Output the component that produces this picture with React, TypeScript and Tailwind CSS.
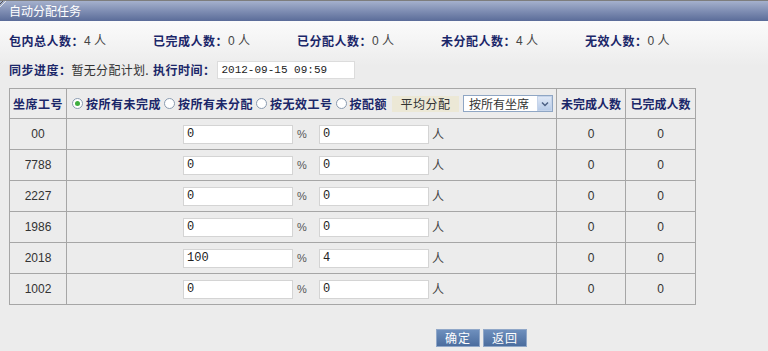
import React from "react";

const rows = [
  { id: "00", pct: "0", num: "0" },
  { id: "7788", pct: "0", num: "0" },
  { id: "2227", pct: "0", num: "0" },
  { id: "1986", pct: "0", num: "0" },
  { id: "2018", pct: "100", num: "4" },
  { id: "1002", pct: "0", num: "0" },
];

const stats = [
  ["包内总人数：", "4 人"],
  ["已完成人数：", "0 人"],
  ["已分配人数：", "0 人"],
  ["未分配人数：", "4 人"],
  ["无效人数：", "0 人"],
];

const cjk = "font-['Noto_Sans_CJK_SC','Liberation_Sans',sans-serif]";

function Radio({ checked, label }: { checked?: boolean; label: string }) {
  return (
    <span className="inline-flex items-center mr-[3px]">
      <span className="w-[11px] h-[11px] rounded-full border border-[#8a9bb0] bg-white flex items-center justify-center">
        {checked && <span className="w-[5px] h-[5px] rounded-full bg-[#3fae3f]" />}
      </span>
      <span className="ml-[3px] font-bold text-[#1b2769] tracking-[0.5px]">{label}</span>
    </span>
  );
}

export default function App() {
  return (
    <div className={`w-[768px] h-[351px] overflow-hidden bg-[#ececec] text-[12px] ${cjk}`}>
      {/* title bar */}
      <div className="relative h-[21px] border-t border-[#7d7d7d] bg-gradient-to-b from-[#a5b1cd] to-[#5b6c99] flex items-center pl-[9px] text-white">
        <svg className="absolute left-0 top-0" width="7" height="7" viewBox="0 0 7 7">
          <path d="M0 6 L6 0" stroke="#e8e8e8" strokeWidth="1" />
          <path d="M0 3 L3 0" stroke="#555" strokeWidth="1" />
        </svg>
        <span className="leading-none">自动分配任务</span>
      </div>

      <div className="bg-[linear-gradient(#fbfbfb,#ececec_45px)] pt-[10px]">
        {/* stats */}
        <div className="flex items-center h-[20px] pl-[9px]">
          {stats.map(([k, v]) => (
            <div key={k} className="w-[144px] shrink-0 flex items-center">
              <span className="font-bold text-[#1b2769] tracking-[0.5px]">{k}</span>
              <span className="text-[#444] font-['Liberation_Sans','Noto_Sans_CJK_SC',sans-serif]">{v}</span>
            </div>
          ))}
        </div>

        {/* progress */}
        <div className="flex items-center h-[20px] mt-[9px] pl-[9px]">
          <span className="font-bold text-[#1b2769] tracking-[0.5px]">同步进度：</span>
          <span className="text-[#333] tracking-[0.3px]">暂无分配计划.</span>
          <span className="ml-[4px] font-bold text-[#1b2769] tracking-[0.5px]">执行时间：</span>
          <div className="ml-[2px] w-[138px] h-[18px] bg-white border border-[#dcdcdc] flex items-center pl-[3px] text-[#222] text-[11px] font-['Liberation_Mono',monospace]">
            2012-09-15 09:59
          </div>
        </div>
      </div>

      {/* table */}
      <table className="ml-[9px] mt-[8px] w-[686px] border-collapse table-fixed">
        <colgroup>
          <col className="w-[57px]" />
          <col className="w-[490px]" />
          <col className="w-[69px]" />
          <col className="w-[70px]" />
        </colgroup>
        <thead>
          <tr className="h-[30px]">
            <th className="border border-[#a6a6a6] font-bold text-[#1b2769] tracking-[0.5px] p-0">坐席工号</th>
            <th className="border border-[#a6a6a6] p-0 text-left font-normal">
              <div className="flex items-center pl-[5px]">
                <Radio checked label="按所有未完成" />
                <Radio label="按所有未分配" />
                <Radio label="按无效工号" />
                <Radio label="按配额" />
                <span className="ml-[2px] w-[67px] h-[16px] bg-[#ece8d6] flex items-center justify-center text-[#333] tracking-[0.5px]">
                  平均分配
                </span>
                <span className="ml-[4px] w-[90px] h-[17px] bg-white border border-[#8fa6c4] flex items-center justify-between pl-[5px] text-[#333]">
                  按所有坐席
                  <span className="w-[15px] h-[15px] bg-gradient-to-b from-[#dfe8f6] to-[#b7cbe8] border border-[#c5d4ea] flex items-center justify-center">
                    <svg width="8" height="6" viewBox="0 0 8 6">
                      <path d="M1 1.5 L4 4.5 L7 1.5" stroke="#4d6185" strokeWidth="1.5" fill="none" />
                    </svg>
                  </span>
                </span>
              </div>
            </th>
            <th className="border border-[#a6a6a6] font-bold text-[#1b2769] p-0">未完成人数</th>
            <th className="border border-[#a6a6a6] font-bold text-[#1b2769] p-0">已完成人数</th>
          </tr>
        </thead>
        <tbody className="font-['Liberation_Sans',sans-serif] text-[#333]">
          {rows.map((r) => (
            <tr key={r.id} className="h-[31px]">
              <td className="border border-[#a6a6a6] text-center p-0">{r.id}</td>
              <td className="border border-[#a6a6a6] p-0">
                <div className="flex items-center justify-center pl-[4px]">
                  <div className="w-[110px] h-[19px] bg-white border border-[#d4d4d4] flex items-center pl-[3px] text-[12px] text-[#222] font-['Liberation_Mono',monospace]">
                    {r.pct}
                  </div>
                  <span className="ml-[4px] w-[22px] text-[#555] text-[11px]">%</span>
                  <div className="w-[110px] h-[19px] bg-white border border-[#d4d4d4] flex items-center pl-[3px] text-[12px] text-[#222] font-['Liberation_Mono',monospace]">
                    {r.num}
                  </div>
                  <span className={`ml-[3px] w-[12px] text-[#444] ${cjk}`}>人</span>
                </div>
              </td>
              <td className="border border-[#a6a6a6] text-center p-0">0</td>
              <td className="border border-[#a6a6a6] text-center p-0">0</td>
            </tr>
          ))}
        </tbody>
      </table>

      {/* actions */}
      <div className="flex mt-[24px] pl-[436px] gap-[3px]">
        {["确定", "返回"].map((t) => (
          <button
            key={t}
            className="w-[44px] h-[18px] bg-gradient-to-b from-[#6e8fbd] to-[#4b6d9e] border border-[#90a7c8] text-white text-[12px] leading-none tracking-[1px]"
          >
            {t}
          </button>
        ))}
      </div>
    </div>
  );
}
